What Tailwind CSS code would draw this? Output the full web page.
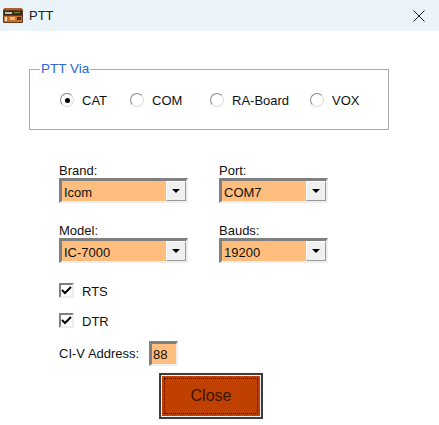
<!DOCTYPE html>
<html lang="en">

<head>
  <meta charset="UTF-8">
  <title>PTT</title>
  <script src="https://cdn.jsdelivr.net/npm/@tailwindcss/browser@4"></script>
</head>

<body class="bg-white text-[#111] h-[425px] w-[439px] overflow-hidden font-['Liberation_Sans',sans-serif] text-[13px] leading-none">

  <!-- Title bar -->
  <div class="h-[31px] bg-[#eaf3f8] flex items-center pl-[3px] pr-[14px]">
    <svg width="20" height="15" viewBox="0 0 20 15" class="mr-[6px]">
      <rect x="0" y="1" width="20" height="14" rx="1" fill="#6b3a1c" />
      <rect x="1" y="0" width="18" height="2" fill="#a8602c" />
      <rect x="1" y="3" width="18" height="4" fill="#3a2a20" />
      <rect x="2" y="4" width="7" height="2" fill="#b9c4c0" />
      <rect x="11" y="4" width="6" height="1" fill="#6f8a4a" />
      <rect x="1" y="8" width="18" height="6" fill="#c7702c" />
      <rect x="2" y="9" width="2" height="4" fill="#f5e2c8" />
      <rect x="7" y="9" width="5" height="3" fill="#f2b27a" />
      <rect x="14" y="9" width="4" height="3" fill="#40362e" />
    </svg>
    <span class="text-[13px] text-[#222]">PTT</span>
    <svg width="12" height="12" viewBox="0 0 12 12" class="ml-auto">
      <path d="M.5.5l11 11M11.5.5l-11 11" stroke="#222" stroke-width="1" fill="none" />
    </svg>
  </div>

  <div class="pl-[29px] pt-[31px]">
    <!-- PTT Via group -->
    <fieldset class="w-[360px] h-[68px] border border-[#aaa] pl-[10px] m-0">
      <legend class="text-[#2a66d9] text-[13.5px] leading-[14px] px-[1px] ml-0">PTT Via</legend>
      <div class="flex items-center mt-[17px] pl-[20px]">
        <label class="flex items-center w-[70px] gap-[8px]">
          <span class="w-[14px] h-[14px] rounded-full border border-[#888] border-r-[#ddd] border-b-[#ddd] flex items-center justify-center"><span class="w-[5px] h-[5px] rounded-full bg-black"></span></span>CAT
        </label>
        <label class="flex items-center w-[80px] gap-[8px]">
          <span class="w-[14px] h-[14px] rounded-full border border-[#888] border-r-[#ddd] border-b-[#ddd]"></span>COM
        </label>
        <label class="flex items-center w-[100px] gap-[8px]">
          <span class="w-[14px] h-[14px] rounded-full border border-[#888] border-r-[#ddd] border-b-[#ddd]"></span>RA-Board
        </label>
        <label class="flex items-center gap-[8px]">
          <span class="w-[14px] h-[14px] rounded-full border border-[#888] border-r-[#ddd] border-b-[#ddd]"></span>VOX
        </label>
      </div>
    </fieldset>

    <!-- Combos -->
    <div class="grid grid-cols-[160px_109px] gap-y-[18px] pl-[30px] mt-[31px]">
      <div>
        <div class="h-[16px] flex items-center pt-[2px] mb-[1px]">Brand:</div>
        <div class="w-[129px] h-[25px] flex border-2 border-t-[3px] border-l-[3px] border-[#808080] border-r-[#eee] border-b-[#eee] bg-[#ffbe7d]">
          <span class="flex-1 flex items-center pl-[2px] pt-[2px]">Icom</span>
          <span class="w-[20px] bg-[#f0f0f0] border border-white border-r-[#999] border-b-[#999] flex items-center justify-center"><span class="border-x-[4px] border-x-transparent border-t-[4px] border-t-black"></span></span>
        </div>
      </div>
      <div>
        <div class="h-[16px] flex items-center pt-[2px] mb-[1px]">Port:</div>
        <div class="w-[109px] h-[25px] flex border-2 border-t-[3px] border-l-[3px] border-[#808080] border-r-[#eee] border-b-[#eee] bg-[#ffbe7d]">
          <span class="flex-1 flex items-center pl-[2px] pt-[2px]">COM7</span>
          <span class="w-[20px] bg-[#f0f0f0] border border-white border-r-[#999] border-b-[#999] flex items-center justify-center"><span class="border-x-[4px] border-x-transparent border-t-[4px] border-t-black"></span></span>
        </div>
      </div>
      <div>
        <div class="h-[16px] flex items-center pt-[2px] mb-[1px]">Model:</div>
        <div class="w-[129px] h-[25px] flex border-2 border-t-[3px] border-l-[3px] border-[#808080] border-r-[#eee] border-b-[#eee] bg-[#ffbe7d]">
          <span class="flex-1 flex items-center pl-[2px] pt-[2px]">IC-7000</span>
          <span class="w-[20px] bg-[#f0f0f0] border border-white border-r-[#999] border-b-[#999] flex items-center justify-center"><span class="border-x-[4px] border-x-transparent border-t-[4px] border-t-black"></span></span>
        </div>
      </div>
      <div>
        <div class="h-[16px] flex items-center pt-[2px] mb-[1px]">Bauds:</div>
        <div class="w-[109px] h-[25px] flex border-2 border-t-[3px] border-l-[3px] border-[#808080] border-r-[#eee] border-b-[#eee] bg-[#ffbe7d]">
          <span class="flex-1 flex items-center pl-[2px] pt-[2px]">19200</span>
          <span class="w-[20px] bg-[#f0f0f0] border border-white border-r-[#999] border-b-[#999] flex items-center justify-center"><span class="border-x-[4px] border-x-transparent border-t-[4px] border-t-black"></span></span>
        </div>
      </div>
    </div>

    <!-- Checkboxes -->
    <div class="pl-[30px] mt-[20px] flex flex-col gap-[15px]">
      <label class="flex items-center gap-[8px] h-[15px]">
        <span class="w-[15px] h-[15px] border-2 border-[#808080] border-r-[#eee] border-b-[#eee] flex items-center justify-center">
          <svg width="11" height="9" viewBox="0 0 11 9"><path d="M1 4l3 3 6-6" stroke="#000" stroke-width="2" fill="none" /></svg>
        </span><span class="pt-[2px]">RTS</span>
      </label>
      <label class="flex items-center gap-[8px] h-[15px]">
        <span class="w-[15px] h-[15px] border-2 border-[#808080] border-r-[#eee] border-b-[#eee] flex items-center justify-center">
          <svg width="11" height="9" viewBox="0 0 11 9"><path d="M1 4l3 3 6-6" stroke="#000" stroke-width="2" fill="none" /></svg>
        </span><span class="pt-[2px]">DTR</span>
      </label>
    </div>

    <!-- CI-V address -->
    <div class="pl-[30px] mt-[13px] flex items-center">
      <span class="w-[90px]">CI-V Address:</span>
      <span class="w-[29px] h-[25px] flex items-center pl-[1px] border-2 border-t-[3px] border-l-[3px] border-[#808080] border-r-[#eee] border-b-[#eee] bg-[#ffbe7d]">88</span>
    </div>

    <!-- Close -->
    <div class="pl-[130px] mt-[7px]">
      <button class="w-[104px] h-[46px] bg-[#bf4000] border-2 border-[#3c3c3c] flex items-center justify-center text-[16px] text-[#3a1500]">
        <span class="w-[100px] h-[42px] border border-[#eee] flex items-center justify-center">
          <span class="w-[94px] h-[36px] flex items-center justify-center border border-dotted border-black">Close</span>
        </span>
      </button>
    </div>
  </div>

</body>

</html>
